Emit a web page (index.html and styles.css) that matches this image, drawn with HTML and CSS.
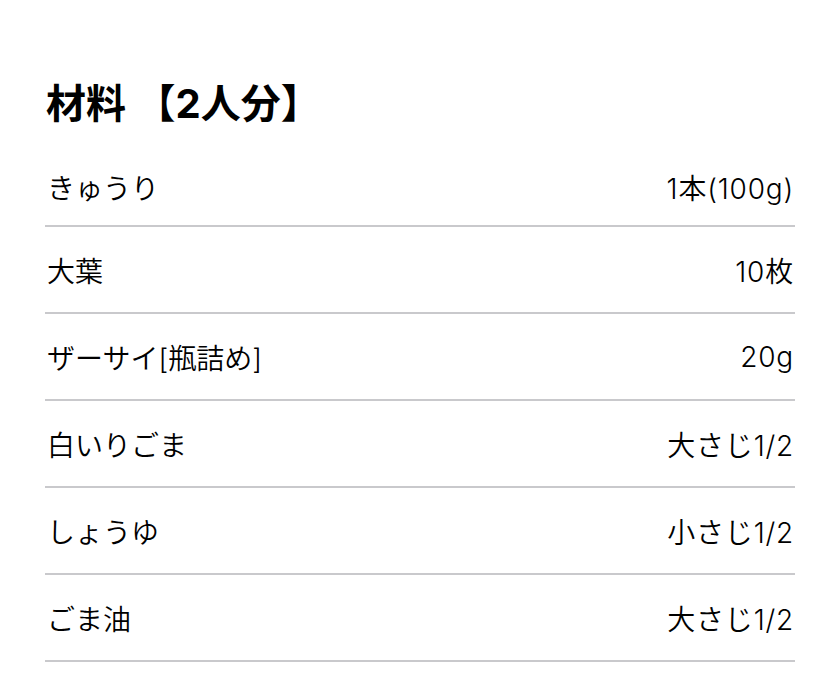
FILE: index.html
```html
<!DOCTYPE html>
<html lang="ja">
<head>
<meta charset="utf-8">
<link rel="stylesheet" href="styles.css">
</head>
<body>
<main class="recipe">
  <h2 class="title">材料 【2人分】</h2>
  <ul class="ingredients">
    <li class="row"><span class="name">きゅうり</span><span class="qty">1本(100g)</span></li>
    <li class="row"><span class="name">大葉</span><span class="qty">10枚</span></li>
    <li class="row"><span class="name">ザーサイ[瓶詰め]</span><span class="qty">20g</span></li>
    <li class="row"><span class="name">白いりごま</span><span class="qty">大さじ1/2</span></li>
    <li class="row"><span class="name">しょうゆ</span><span class="qty">小さじ1/2</span></li>
    <li class="row"><span class="name">ごま油</span><span class="qty">大さじ1/2</span></li>
  </ul>
</main>
</body>
</html>
```
FILE: styles.css
```css
html, body {
  margin: 0;
  padding: 0;
  background: #ffffff;
}
body {
  font-family: "Inter", "Noto Sans CJK JP", sans-serif;
  color: #111111;
}
.recipe {
  padding: 80px 45px 0;
}
.title {
  margin: 0;
  font-size: 40px;
  line-height: 48px;
  font-weight: 700;
  color: #000000;
  padding-left: 1px;
}
.ingredients {
  list-style: none;
  margin: 20px 0 0;
  padding: 0;
}
.row {
  display: flex;
  justify-content: space-between;
  align-items: center;
  height: 85px;
  border-bottom: 2px solid #c9c9cc;
  font-size: 28px;
  font-weight: 350;
  color: #000000;
}
.row:first-child {
  height: 77px;
}
.name {
  padding-left: 2px;
}
.qty {
  padding-right: 1px;
  letter-spacing: 0.8px;
}
```
